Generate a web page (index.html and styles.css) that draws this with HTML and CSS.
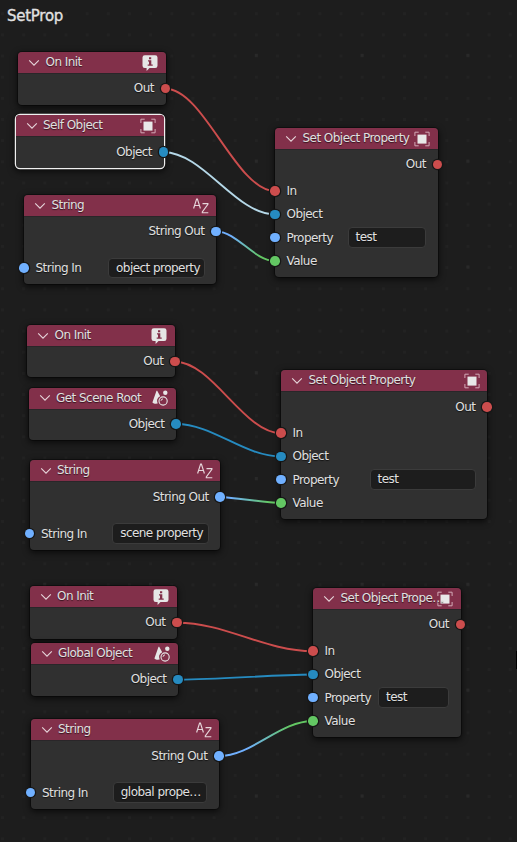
FILE: index.html
```html
<!DOCTYPE html>
<html lang="en">
<head>
<meta charset="utf-8">
<title>SetProp</title>
<link rel="stylesheet" href="styles.css">
</head>
<body>
<svg class="defs" width="0" height="0">
  <symbol id="chev" viewBox="0 0 12 8"><path d="M1.2 1.4 6 6.2 10.8 1.4" fill="none" stroke="#e6d5da" stroke-width="1.1"/></symbol>
  <symbol id="info" viewBox="0 0 16 16"><path fill="#e6e6e6" fill-rule="evenodd" d="M2.8.3h10.4a2.3 2.3 0 0 1 2.3 2.3v8.200a2.300 2.300 0 0 1-2.300 2.300H7.500L4.600 16V13.100H2.800A2.300 2.300 0 0 1 .5 10.800V2.600A2.300 2.300 0 0 1 2.800.3zM7 2.200v2h2.200v-2zM6 5.300v1.200h1v3H5.700v1.300h5V9.500H9.300V5.300z"/></symbol>
  <symbol id="obj" viewBox="0 0 16 16"><path d="M.9 5V1.200H4.700M11.300 1.200h3.800V5M15.100 11v3.800h-3.800M4.700 14.800H.9V11" fill="none" stroke="#d3a9b5" stroke-width="1"/><path fill="#e8e8e8" d="M3.500 3.600h9v9h-9z"/></symbol>
  <symbol id="scene" viewBox="0 0 16 16"><path fill="#e6e6e6" d="M4.500.8h.7L8.200 6.200A5.200 5.200 0 0 0 5.700 13.600C3.500 14 1.300 13.500.4 12.500z"/><circle cx="13.300" cy="2.700" r="2.200" fill="#e6e6e6"/><circle cx="11.100" cy="11" r="4.100" fill="none" stroke="#e6e6e6" stroke-width="1.100"/><path d="M9 10.800a2 2 0 0 1 2-1.900" fill="none" stroke="#e6e6e6" stroke-width="1"/></symbol>
  <symbol id="az" viewBox="0 0 16 16"><path d="M.6 10.500 3.600 1h.8L7.400 10.500M1.600 7.500h4.800M9.500 5.600h5.400v.8L9.300 14v.7h6" fill="none" stroke="#e6d5da" stroke-width="1.150"/></symbol>
</svg>
<main class="canvas">
  <h1 class="frame-title">SetProp</h1>

  <section class="node n1"><header><svg class="chev"><use href="#chev"/></svg><span class="title">On Init</span><svg class="icon"><use href="#info"/></svg></header>
    <div class="row out">Out<i class="sock red"></i></div></section>
  <section class="node n2 active"><header><svg class="chev"><use href="#chev"/></svg><span class="title">Self Object</span><svg class="icon"><use href="#obj"/></svg></header>
    <div class="row out">Object<i class="sock blue"></i></div></section>
  <section class="node n3"><header><svg class="chev"><use href="#chev"/></svg><span class="title">String</span><svg class="icon"><use href="#az"/></svg></header>
    <div class="row out">String Out<i class="sock sky"></i></div>
    <div class="row late"><i class="sock sky"></i>String In<span class="field">object property</span></div></section>
  <section class="node n4"><header><svg class="chev"><use href="#chev"/></svg><span class="title">Set Object Property</span><svg class="icon"><use href="#obj"/></svg></header>
    <div class="row out">Out<i class="sock red"></i></div>
    <div class="row first"><i class="sock red"></i>In</div>
    <div class="row"><i class="sock blue"></i>Object</div>
    <div class="row"><i class="sock sky"></i>Property<span class="field">test</span></div>
    <div class="row"><i class="sock green"></i>Value</div></section>

  <section class="node n5"><header><svg class="chev"><use href="#chev"/></svg><span class="title">On Init</span><svg class="icon"><use href="#info"/></svg></header>
    <div class="row out">Out<i class="sock red"></i></div></section>
  <section class="node n6"><header><svg class="chev"><use href="#chev"/></svg><span class="title">Get Scene Root</span><svg class="icon"><use href="#scene"/></svg></header>
    <div class="row out">Object<i class="sock blue"></i></div></section>
  <section class="node n7"><header><svg class="chev"><use href="#chev"/></svg><span class="title">String</span><svg class="icon"><use href="#az"/></svg></header>
    <div class="row out">String Out<i class="sock sky"></i></div>
    <div class="row late"><i class="sock sky"></i>String In<span class="field">scene property</span></div></section>
  <section class="node n8"><header><svg class="chev"><use href="#chev"/></svg><span class="title">Set Object Property</span><svg class="icon"><use href="#obj"/></svg></header>
    <div class="row out">Out<i class="sock red"></i></div>
    <div class="row first"><i class="sock red"></i>In</div>
    <div class="row"><i class="sock blue"></i>Object</div>
    <div class="row"><i class="sock sky"></i>Property<span class="field">test</span></div>
    <div class="row"><i class="sock green"></i>Value</div></section>

  <section class="node n9"><header><svg class="chev"><use href="#chev"/></svg><span class="title">On Init</span><svg class="icon"><use href="#info"/></svg></header>
    <div class="row out">Out<i class="sock red"></i></div></section>
  <section class="node n10"><header><svg class="chev"><use href="#chev"/></svg><span class="title">Global Object</span><svg class="icon"><use href="#scene"/></svg></header>
    <div class="row out">Object<i class="sock blue"></i></div></section>
  <section class="node n11"><header><svg class="chev"><use href="#chev"/></svg><span class="title">String</span><svg class="icon"><use href="#az"/></svg></header>
    <div class="row out">String Out<i class="sock sky"></i></div>
    <div class="row late"><i class="sock sky"></i>String In<span class="field">global prope…</span></div></section>
  <section class="node n12"><header><svg class="chev"><use href="#chev"/></svg><span class="title">Set Object Prope…</span><svg class="icon"><use href="#obj"/></svg></header>
    <div class="row out">Out<i class="sock red"></i></div>
    <div class="row first"><i class="sock red"></i>In</div>
    <div class="row"><i class="sock blue"></i>Object</div>
    <div class="row"><i class="sock sky"></i>Property<span class="field">test</span></div>
    <div class="row"><i class="sock green"></i>Value</div></section>

  <svg class="links" viewBox="0 0 517 842">
    <defs>
      <linearGradient id="g1" gradientUnits="userSpaceOnUse" x1="217" y1="0" x2="275" y2="0"><stop offset=".25" stop-color="#70b0ff"/><stop offset=".75" stop-color="#63c763"/></linearGradient>
      <linearGradient id="g2" gradientUnits="userSpaceOnUse" x1="221" y1="0" x2="281" y2="0"><stop offset=".15" stop-color="#70b0ff"/><stop offset=".8" stop-color="#63c763"/></linearGradient>
      <linearGradient id="g3" gradientUnits="userSpaceOnUse" x1="219" y1="0" x2="313" y2="0"><stop offset=".3" stop-color="#70b0ff"/><stop offset=".75" stop-color="#63c763"/></linearGradient>
    </defs>
    <path class="w-red" d="M165.500 88.700C204 88.700 236 191 275 191"/>
    <path class="w-pale" d="M163.700 152.200C203 152.200 236 214.500 275 214.500"/>
    <path class="w-g1" d="M216.500 231.500C237 231.500 254 261 275 261"/>
    <path class="w-red" d="M175.300 361.700C212 361.700 244 433.200 281 433.200"/>
    <path class="w-blue" d="M176.300 424C213 424 244 456.500 281 456.500"/>
    <path class="w-g2" d="M220.500 497C238 498 262 502.300 281 503"/>
    <path class="w-red" d="M177.300 622.700C225 622.700 265 651.200 313 651.200"/>
    <path class="w-blue" d="M178.500 679.700C225 679 266 675.200 313 674.500"/>
    <path class="w-g3" d="M218.700 756C252 756 280 721 313 721"/>
  </svg>
  <span class="edge-tab"></span>
</main>
</body>
</html>
```
FILE: styles.css
```css
body { margin: 0; background: #1d1d1d; }
.defs { position: absolute; }
.canvas {
  position: relative; width: 517px; height: 842px; overflow: hidden;
  color: #e0e0e0; font: 12px/16px "DejaVu Sans", sans-serif; letter-spacing: -0.540px;
  background:
    conic-gradient(from 90deg at 102.800px 102.800px, #292929 90deg, transparent 0) -59.600px -49px / 105.800px 105.800px,
    conic-gradient(from 90deg at 18.160px 18.160px, #222 90deg, transparent 0) -17.200px -6px / 21.160px 21.160px,
    #1d1d1d;
}
.frame-title { margin: 0; padding: 6px 0 0 7px; font-size: 15px; line-height: 20px; font-weight: 400; letter-spacing: -0.270px; -webkit-text-stroke: .3px #e6e6e6; }
.node {
  position: absolute; box-sizing: border-box; background: #303030; border-radius: 4px;
  box-shadow: 0 0 0 1px rgba(0,0,0,.35), 0 2px 6px 1px rgba(0,0,0,.6);
  text-shadow: 0 1px 1px rgba(0,0,0,.6);
}
.node header {
  display: flex; align-items: center; height: 21px; padding-left: 10px;
  background: #82304a; border-radius: 4px 4px 0 0; white-space: nowrap;
  box-shadow: 0 1px 0 #2a2629;
}
.chev { width: 12px; height: 8px; flex: none; }
.title { flex: 1 1 0; min-width: 0; margin-left: 5.500px; position: relative; top: -.5px; }
.icon { width: 16px; height: 16px; flex: none; margin-right: 8px; }
.n3 .icon, .n7 .icon, .n8 .icon, .n11 .icon { margin-right: 7px; }
.active { box-shadow: 0 0 0 1.200px #f0f0f0, 0 2px 6px 2px rgba(0,0,0,.6); }
.row { position: relative; display: flex; align-items: center; height: 23.300px; padding: 0 11.500px; white-space: nowrap; }
.row.out { justify-content: flex-end; margin-top: 3.500px; }
.row.first { margin-top: 3.500px; }
.row.late { margin-top: 13.500px; }
.n2 .out, .n7 .out, .n8 .out, .n11 .out { margin-top: 4.100px; }
.n8 .first { margin-top: 2.900px; }
.sock { position: absolute; left: -4.900px; top: 7px; width: 9.600px; height: 9.600px; border-radius: 50%; box-shadow: 0 0 0 1.200px #171717; z-index: 2; }
.out .sock { left: auto; right: -4.900px; }
.red { background: #cc4d4d; }
.blue { background: #268bc0; }
.sky { background: #70b0ff; }
.green { background: #63c763; }
.field {
  box-sizing: border-box; height: 20.500px; margin-left: auto; padding: 1px 0 0 7px; line-height: 17px;
  background: #1d1d1d; border: 1px solid #3b3b3b; border-radius: 4px; overflow: hidden;
}
.n1 { left: 18px; top: 52px; width: 147.500px; height: 52.500px; }
.n2 { left: 15.500px; top: 115px; width: 148px; height: 53px; }
.n3 { left: 24px; top: 195px; width: 192px; height: 89px; }
.n4 { left: 275px; top: 128px; width: 162.500px; height: 149px; }
.n5 { left: 27px; top: 325px; width: 148px; height: 52px; }
.n6 { left: 28.500px; top: 387.500px; width: 147.500px; height: 52px; }
.n7 { left: 29.500px; top: 460px; width: 190.700px; height: 89.500px; }
.n8 { left: 281px; top: 370px; width: 206px; height: 149px; }
.n9 { left: 29.500px; top: 586px; width: 147.500px; height: 52.500px; }
.n10 { left: 30.500px; top: 643px; width: 147.500px; height: 52.500px; }
.n11 { left: 30.500px; top: 719px; width: 188.300px; height: 89.500px; }
.n12 { left: 313px; top: 588px; width: 147.500px; height: 149px; }
.n3 .field, .n7 .field { width: 96.500px; }
.n4 .field { width: 78.500px; }
.n8 .field { width: 106px; }
.n11 .field { width: 94.500px; }
.n12 .field { width: 71px; }
.links { position: absolute; inset: 0; width: 517px; height: 842px; pointer-events: none; }
.links path { fill: none; stroke-width: 1.900px; }
.w-red { stroke: #cc4d4d; }
.w-pale { stroke: #b5d8e8; }
.w-blue { stroke: #268bc0; }
.w-g1 { stroke: url(#g1); }
.w-g2 { stroke: url(#g2); }
.w-g3 { stroke: url(#g3); }
.edge-tab { position: absolute; right: 0; top: 651px; width: 1px; height: 18px; background: #000; }
```
